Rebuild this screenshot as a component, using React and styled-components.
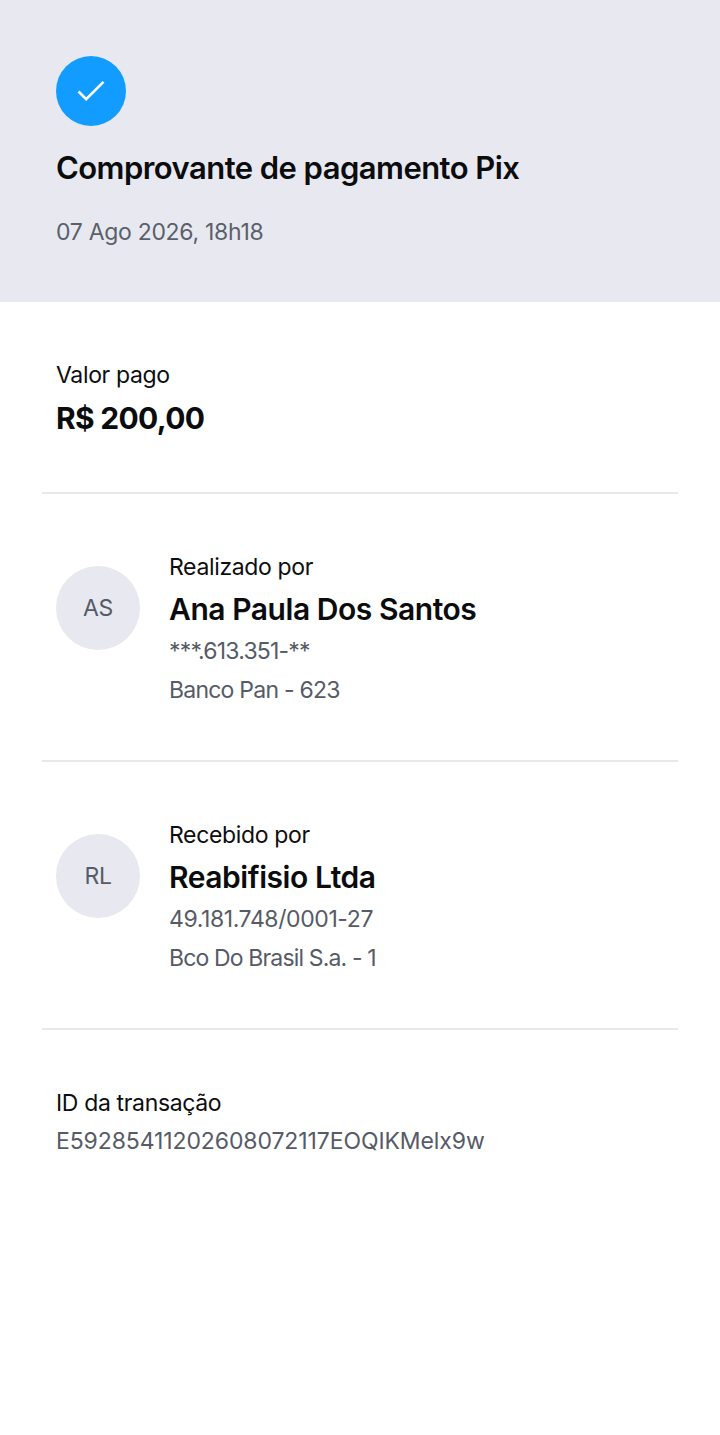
import React from 'react';
import styled, { createGlobalStyle } from 'styled-components';

const GlobalStyle = createGlobalStyle`
  html, body {
    margin: 0;
    padding: 0;
    background: #fff;
  }
  body {
    font-family: Inter, "Liberation Sans", sans-serif;
  }
`;

const App = () => {
  return (
    <Page>
      <GlobalStyle />
      <Header>
        <CheckCircle>
          <svg width="30" height="24" viewBox="0 0 30 24" fill="none">
            <path d="M2.5 12.5L10.2 20.2L27.5 2.8" stroke="#fff" strokeWidth="2.6" />
          </svg>
        </CheckCircle>
        <Title>Comprovante de pagamento Pix</Title>
        <DateText>07 Ago 2026, 18h18</DateText>
      </Header>

      <AmountSection>
        <Label>Valor pago</Label>
        <Amount>R$ 200,00</Amount>
      </AmountSection>

      <Divider />

      <PartyRow>
        <Avatar>AS</Avatar>
        <PartyInfo>
          <Label>Realizado por</Label>
          <Name>Ana Paula Dos Santos</Name>
          <Detail $tracking={-0.8}>***.613.351-**</Detail>
          <Bank $tracking={-0.77}>Banco Pan - 623</Bank>
        </PartyInfo>
      </PartyRow>

      <Divider />

      <PartyRow>
        <Avatar>RL</Avatar>
        <PartyInfo>
          <Label>Recebido por</Label>
          <Name>Reabifisio Ltda</Name>
          <Detail $tracking={-0.4}>49.181.748/0001-27</Detail>
          <Bank $tracking={-0.85}>Bco Do Brasil S.a. - 1</Bank>
        </PartyInfo>
      </PartyRow>

      <Divider />

      <IdSection>
        <Label>ID da transação</Label>
        <Detail $tracking={-0.1}>E59285411202608072117EOQIKMelx9w</Detail>
      </IdSection>
    </Page>
  );
};

const Page = styled.div`
  width: 720px;
  min-height: 1435px;
  background: #fff;
`;

const Header = styled.header`
  box-sizing: border-box;
  height: 302px;
  padding: 56px 56px 0;
  background-color: #e8e9f0;
`;

const CheckCircle = styled.div`
  display: flex;
  align-items: center;
  justify-content: center;
  width: 70px;
  height: 70px;
  border-radius: 50%;
  background-color: #129cff;
`;

const Title = styled.h1`
  margin: 20px 0 0;
  font-size: 31px;
  font-weight: 600;
  line-height: 44px;
  letter-spacing: -0.55px;
  color: #0b0c0e;
`;

const DateText = styled.div`
  margin-top: 22px;
  font-size: 23px;
  line-height: 40px;
  letter-spacing: -0.3px;
  color: #5a5f6b;
`;

const AmountSection = styled.section`
  padding: 54px 56px 50px;
`;

const Label = styled.div`
  font-size: 23px;
  line-height: 38px;
  letter-spacing: -0.35px;
  color: #0d0e10;
`;

const Amount = styled.div`
  font-size: 30px;
  font-weight: 700;
  line-height: 48px;
  letter-spacing: -0.7px;
  color: #0b0c0e;
`;

const Divider = styled.hr`
  height: 2px;
  margin: 0 42px;
  border: 0;
  background-color: #e8e9ed;
`;

const PartyRow = styled.section`
  display: flex;
  align-items: flex-start;
  gap: 29px;
  padding: 54px 56px 51px;
`;

const Avatar = styled.div`
  display: flex;
  flex: none;
  align-items: center;
  justify-content: center;
  width: 84px;
  height: 84px;
  margin-top: 18px;
  border-radius: 50%;
  background-color: #e8e9f0;
  font-size: 23px;
  letter-spacing: -0.3px;
  color: #565b67;
`;

const PartyInfo = styled.div`
  min-width: 0;
`;

const Name = styled.div`
  font-size: 30px;
  font-weight: 600;
  line-height: 46px;
  letter-spacing: -0.45px;
  color: #0b0c0e;
`;

const Detail = styled.div`
  font-size: 23px;
  line-height: 38px;
  letter-spacing: ${({ $tracking }) => $tracking}px;
  color: #565b67;
`;

const Bank = styled(Detail)`
  margin-top: 1px;
`;

const IdSection = styled.section`
  padding: 54px 56px 0;
`;

export default App;
